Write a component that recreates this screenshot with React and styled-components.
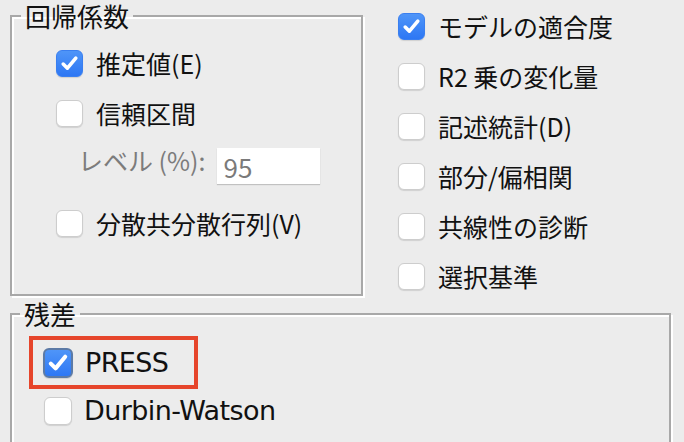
import React from "react";
import styled, { createGlobalStyle } from "styled-components";

const GlobalStyle = createGlobalStyle`
  html, body {
    margin: 0;
    padding: 0;
    background: #ececec;
  }
  body {
    font-family: "Noto Sans CJK JP", "DejaVu Sans", sans-serif;
    color: #111;
    width: 684px;
    height: 442px;
    overflow: hidden;
  }
`;

const Page = styled.div`
  padding: 2px 0 0 10px;
`;

const TopArea = styled.div`
  display: flex;
  align-items: flex-start;
  gap: 35px;
  height: 298px;
`;

const Group = styled.fieldset`
  margin: 0;
  padding: 0;
  min-width: 0;
  width: ${(p) => p.$width}px;
  height: ${(p) => p.$height}px;
  box-sizing: border-box;
  border: 2px solid #a8a8a8;
  box-shadow: 2px 2px 0 #fff, inset 2px 2px 0 #fff;
`;

const Legend = styled.legend`
  margin-left: ${(p) => p.$offset}px;
  padding: 0 4px;
  font-size: ${(p) => p.$size}px;
  line-height: 28px;
  color: #111;
`;

const List = styled.div`
  display: flex;
  flex-direction: column;
  padding-left: ${(p) => p.$indent}px;
  padding-top: ${(p) => p.$top}px;
`;

const Row = styled.label`
  display: flex;
  align-items: center;
  gap: 13px;
  height: 50px;
  font-size: 25px;
  line-height: 30px;
  white-space: nowrap;
`;

const LevelRow = styled.div`
  display: flex;
  align-items: flex-start;
  height: 60px;
  padding-top: 10px;
  padding-left: 22px;
  box-sizing: border-box;
  gap: 12px;
`;

const LevelLabel = styled.span`
  font-size: 25px;
  line-height: 30px;
  color: #7c7c7c;
  margin-top: -3px;
`;

const LevelInput = styled.div`
  width: 103px;
  height: 36px;
  background: #fff;
  box-shadow: 0 1px 1px rgba(0, 0, 0, 0.18);
  box-sizing: border-box;
  padding-left: 6px;
  font-size: 26px;
  line-height: 38px;
  color: #7a7a7a;
`;

const RightColumn = styled.div`
  display: flex;
  flex-direction: column;
  margin-top: -1px;
`;

const Box = styled.span`
  flex: none;
  width: ${(p) => p.$size || 27}px;
  height: ${(p) => p.$size || 27}px;
  box-sizing: border-box;
  border-radius: 6px;
  display: flex;
  align-items: center;
  justify-content: center;
  background: ${(p) =>
    p.$checked ? "linear-gradient(#4f95f8, #2d77f4)" : "#fff"};
  border: ${(p) =>
    p.$focus
      ? "2px solid #5c7aa6"
      : p.$checked
      ? "1px solid #3a7ff0"
      : "1px solid #cdcdcd"};
  box-shadow: 0 1px 1px rgba(0, 0, 0, 0.12);
`;

const BottomList = styled.div`
  display: flex;
  flex-direction: column;
  align-items: flex-start;
  padding-left: 17px;
  padding-top: 8px;
`;

const Highlight = styled.div`
  border: 4px solid #e6452b;
  padding: 0 26px 0 10px;
  height: 53px;
  box-sizing: border-box;
  display: flex;
  align-items: center;
`;

const LatinRow = styled.label`
  display: flex;
  align-items: center;
  gap: 12px;
  height: ${(p) => p.$h || 50}px;
  padding-left: ${(p) => p.$pl || 0}px;
  font-family: "DejaVu Sans", sans-serif;
  font-size: 27px;
  letter-spacing: -0.6px;
  line-height: 30px;
  color: #111;
  white-space: nowrap;
`;

const Check = ({ size }) => (
  <svg width={size} height={size} viewBox="0 0 20 20">
    <path
      d="M4 10.5 L8 14.5 L16 4.8"
      fill="none"
      stroke="#fff"
      strokeWidth="3.4"
      strokeLinecap="round"
      strokeLinejoin="round"
    />
  </svg>
);

const CheckBox = ({ checked, focus, size = 27 }) => (
  <Box $checked={checked} $focus={focus} $size={size}>
    {checked && <Check size={size - 6} />}
  </Box>
);

const Option = ({ checked, children }) => (
  <Row>
    <CheckBox checked={checked} />
    <span>{children}</span>
  </Row>
);

const rightOptions = [
  { label: "モデルの適合度", checked: true },
  { label: "R2 乗の変化量" },
  { label: "記述統計(D)" },
  { label: "部分/偏相関" },
  { label: "共線性の診断" },
  { label: "選択基準" },
];

export default function App() {
  return (
    <>
      <GlobalStyle />
      <Page>
        <TopArea>
          <Group $width={353} $height={294}>
            <Legend $offset={9} $size={26}>回帰係数</Legend>
            <List $indent={44} $top={8}>
              <Option checked>推定値(E)</Option>
              <Option>信頼区間</Option>
              <LevelRow>
                <LevelLabel>レベル (%):</LevelLabel>
                <LevelInput>95</LevelInput>
              </LevelRow>
              <Option>分散共分散行列(V)</Option>
            </List>
          </Group>
          <RightColumn>
            {rightOptions.map((o) => (
              <Option key={o.label} checked={o.checked}>
                {o.label}
              </Option>
            ))}
          </RightColumn>
        </TopArea>
        <Group $width={661} $height={160}>
          <Legend $offset={8} $size={26}>残差</Legend>
          <BottomList>
            <Highlight>
              <LatinRow $h={45}>
                <CheckBox checked focus size={30} />
                <span>PRESS</span>
              </LatinRow>
            </Highlight>
            <LatinRow $h={44} $pl={15}>
              <CheckBox size={28} />
              <span>Durbin-Watson</span>
            </LatinRow>
          </BottomList>
        </Group>
      </Page>
    </>
  );
}
